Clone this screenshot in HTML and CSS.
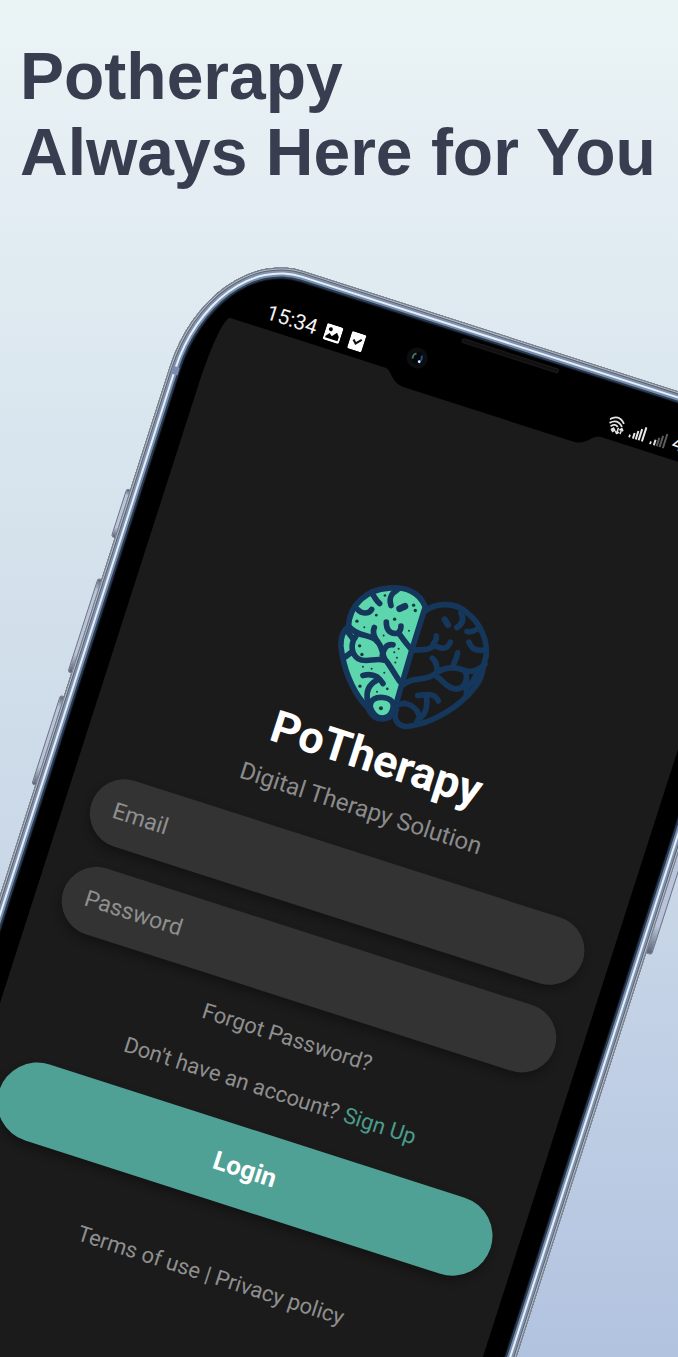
FILE: index.html
```html
<!DOCTYPE html>
<html lang="en">
<head>
<meta charset="utf-8">
<meta name="viewport" content="width=device-width, initial-scale=1">
<title>Potherapy</title>
<link rel="stylesheet" href="styles.css">
</head>
<body>
<main class="page">
  <h1 class="headline">Potherapy<br>Always Here for You</h1>

  <section class="phone" aria-label="PoTherapy app">
    <span class="key key-mute"></span>
    <span class="key key-up"></span>
    <span class="key key-down"></span>
    <span class="key key-power"></span>
    <div class="frame"></div>
    <span class="antenna"></span>

    <header class="status">
      <div class="status-group">
        <span>15:34</span>
        <svg width="17" height="17" viewBox="0 0 17 17"><path fill="#fff" fill-rule="evenodd" d="M2 0h13a2 2 0 0 1 2 2v13a2 2 0 0 1-2 2H2a2 2 0 0 1-2-2V2a2 2 0 0 1 2-2zM2 13v1.500h13V10l-3-3.500-4 5-3-2.500zM5 3a2 2 0 1 0 .01 0z"/></svg>
        <svg width="15" height="18" viewBox="0 0 14 17"><path fill="#fff" d="M1 0h12l1 1v15l-1 1H1l-1-1V1z"/><path fill="none" stroke="#111" stroke-width="2" d="M3.500 7.500l3 3 4.500-5"/></svg>
      </div>
      <div class="status-group status-right">
        <svg width="17" height="18" viewBox="0 0 17 18" fill="none" stroke="#e4e4e4" stroke-width="1.800"><path d="M0 5.500Q7.500-2.500 15 5.500M1 9Q7.500 2.500 14 9M3 12Q7 7.500 10 10.500"/><path d="M5 14.500l1.500-1.500L8 14.500 6.500 16z"/><path stroke-width="1.500" d="M11 11v6M9 15l2 2.200L13 15M14.500 16.500V11M12.500 13l2-2.200 2 2.200"/></svg>
        <svg width="16" height="16" viewBox="0 0 16 16" fill="#e8e8e8"><path d="M0 13h2v3H0zM4 10h2v6H4zM7 7h2v9H7zM10 4h2v12h-2zM13.500 1h2v15h-2z"/></svg>
        <svg width="16" height="16" viewBox="0 0 16 16"><path fill="#ddd" d="M0 13h2v3H0zM4 10h2v6H4z"/><path fill="#5c5c5c" d="M7 7h2v9H7zM10 4h2v12h-2zM13.500 1h2v15h-2z"/></svg>
        <span>45%</span>
      </div>
    </header>
    <span class="speaker"></span>

    <div class="screen">
      <svg class="notch" width="226" height="14" viewBox="0 0 226 14"><path d="M0-2V0C8 1 8 13 26 13H200C216 13 216 1 226 0V-2z"/></svg>

      <svg class="logo" width="160" height="152" viewBox="28 38 480 456">
        <g transform="rotate(-17.800 280 262)" fill="none" stroke="#15375c" stroke-width="17" stroke-linecap="round" stroke-linejoin="round">
          <path fill="#5dd6ae" d="M315 112C298 68 255 50 205 56C140 60 88 104 84 172C60 190 58 226 65 252C76 320 108 382 142 414C156 444 176 452 196 447C215 444 225 428 226 408L243 350L275 240Z"/>
          <path d="M315 124C345 100 405 96 440 130C480 160 504 215 497 262C486 292 490 322 466 350C420 410 340 462 262 471C230 471 218 448 228 420"/>
          <path d="M87 172C110 202 148 194 168 212S186 262 196 272S228 322 240 338"/>
          <path d="M106 202C90 222 92 254 114 268S165 264 190 272M76 262L96 246M98 208L82 186"/>
          <path d="M162 174C154 192 164 202 170 216M218 226C196 222 190 242 186 258"/>
          <path d="M112 120C122 132 144 136 154 120M158 76C164 84 168 94 178 102M212 108C204 82 216 70 232 60"/>
          <path stroke-width="20" d="M238 118L254 110"/>
          <path d="M198 158C198 180 206 190 224 192S242 170 242 170M236 192C246 206 256 222 274 240"/>
          <path d="M128 318C158 310 176 322 188 342M168 334C144 346 136 366 142 398"/>
          <path fill="#5dd6ae" d="M150 414C148 390 168 382 188 384S226 396 216 424S166 458 150 414Z"/>
          <path d="M276 242C312 240 330 242 342 226M348 200C350 214 338 222 338 226C356 236 380 246 390 218"/>
          <path stroke-width="19" d="M373 150L383 166"/>
          <path d="M422 130C430 146 430 162 410 174M440 186C454 190 462 184 472 178M446 218C452 236 466 246 490 242"/>
          <path d="M252 344C278 320 310 338 342 314S410 292 430 302S480 300 494 284M336 266C354 280 346 290 352 306M412 250C410 266 402 276 398 292"/>
          <path d="M350 322C370 332 376 356 406 358S444 324 434 306M436 336C432 350 442 362 438 374M474 300C466 318 466 330 446 348"/>
          <path d="M292 378C320 374 344 370 354 394M318 378C322 404 318 430 302 444"/>
          <path d="M230 408C250 394 280 406 292 428S290 450 290 456"/>
        </g>
        <g transform="rotate(-17.800 280 262)" fill="#123a3c">
          <circle cx="110" cy="155" r="5"/><circle cx="118" cy="229" r="5"/><circle cx="125" cy="255" r="5"/><circle cx="119" cy="350" r="5"/><circle cx="182" cy="416" r="6"/><circle cx="223" cy="149" r="5"/><circle cx="280" cy="107" r="5"/><circle cx="285" cy="123" r="5"/><circle cx="168" cy="137" r="4"/><circle cx="194" cy="78" r="4"/><circle cx="128" cy="292" r="3"/><circle cx="154" cy="298" r="3"/><circle cx="192" cy="310" r="3"/><circle cx="201" cy="358" r="4"/><circle cx="170" cy="367" r="3"/><circle cx="222" cy="248" r="3"/><circle cx="235" cy="238" r="3"/><circle cx="230" cy="265" r="3"/><circle cx="225" cy="279" r="3"/><circle cx="266" cy="184" r="3"/><circle cx="190" cy="198" r="3"/><circle cx="132" cy="173" r="3"/>
        </g>
      </svg>

      <h2 class="brand">PoTherapy</h2>
      <p class="tagline">Digital Therapy Solution</p>

      <form class="form">
        <input class="field" type="email" placeholder="Email" aria-label="Email">
        <input class="field" type="password" placeholder="Password" aria-label="Password">
        <a class="note" href="#forgot">Forgot Password?</a>
        <p class="note note-signup">Don't have an account? <a class="signup" href="#signup">Sign Up</a></p>
        <button class="login" type="button">Login</button>
      </form>
      <p class="note note-legal"><a href="#terms">Terms of use</a> | <a href="#privacy">Privacy policy</a></p>
    </div>
    <svg class="camera" width="22" height="22" viewBox="0 0 22 22"><circle cx="11" cy="11" r="10.500" fill="#0c0d0e"/><circle cx="11" cy="11" r="6" fill="#030508"/><path d="M7 13a4.500 4.500 0 0 1 2-6" fill="none" stroke="#4d7364" stroke-width="2"/><path d="M14.500 7.500a5 5 0 0 1 0 6" fill="none" stroke="#1f4f96" stroke-width="2"/><circle cx="14" cy="14" r="1.400" fill="#dcebff"/></svg>
  </section>
</main>
</body>
</html>
```
FILE: styles.css
```css
* { box-sizing: border-box; }

body { margin: 0; }

.page {
  height: 100vh;
  overflow: hidden;
  background: linear-gradient(#ebf4f5 0%, #e1ebf2 18%, #d7e4ed 36%, #cad8e8 63%, #b2c3e0 100%);
  font-family: Roboto, "Liberation Sans", sans-serif;
}

.headline {
  margin: 0;
  padding: 38px 0 0 20px;
  height: 241px;
  color: #383e4f;
  font: bold 66px/76px "Liberation Sans", Arial, sans-serif;
  white-space: nowrap;
}

/* Device */
.phone {
  position: relative;
  width: 633px;
  min-height: 1340px;
  margin-left: 210px;
  padding: 0 32px 0 33px;
  border-radius: 98px / 132px;
  background: #000;
  transform: rotate(17.8deg);
  transform-origin: 0 0;
}

.frame {
  position: absolute;
  inset: 0;
  border-radius: inherit;
  box-shadow:
    inset 0 0 0 1px #747981,
    inset 0 0 0 2px #b3bcc8,
    inset 0 0 0 3px #5b6371,
    inset 0 0 0 5px #8193b0,
    inset 0 0 0 7px #e6eff8,
    inset 0 0 0 9px #7890b0,
    inset 0 0 0 11px #2b3a50,
    inset 0 0 0 12px #0b1017;
}

.antenna {
  position: absolute;
  left: 3px;
  top: 130px;
  width: 7px;
  height: 8px;
  background: #7d8ab0;
}

.key {
  position: absolute;
  left: -4px;
  width: 6px;
  border: 1px solid #6b7282;
  border-radius: 3px 0 0 3px;
  background: linear-gradient(#5c6578, #b9c4dc 12%, #b9c4dc 80%, #5c6578);
}
.key-mute { top: 261px; height: 51px; }
.key-up { top: 355px; height: 99px; }
.key-down { top: 478px; height: 94px; }
.key-power {
  top: 400px;
  left: auto;
  right: -6px;
  width: 8px;
  height: 145px;
  border-radius: 0 3px 3px 0;
}

.status {
  position: relative;
  display: flex;
  justify-content: space-between;
  height: 67px;
  padding: 34px 60px 0 43px;
  color: #f2f2f2;
  font-size: 21px;
  line-height: 33px;
}
.status-group { display: flex; align-items: center; gap: 9px; }
.status-right { gap: 6px; }

.speaker {
  position: absolute;
  left: 270px;
  top: 15px;
  width: 102px;
  height: 5px;
  border: 1px solid #1c1c1c;
  border-radius: 3px;
  background: #111;
}
.camera { position: absolute; left: 222px; top: 37px; }

/* App screen */
.screen {
  position: relative;
  display: flex;
  flex-direction: column;
  min-height: 1240px;
  padding: 192px 26px 0;
  border-radius: 10px 10px 40px 40px / 70px 70px 40px 40px;
  background: #1b1b1b;
  text-align: center;
}
.notch { position: absolute; left: 173px; top: 0; overflow: visible; }
.logo { align-self: center; overflow: visible; }

.brand {
  margin: 5px 0 0;
  color: #fff;
  font-size: 45px;
  line-height: 52px;
}
.tagline {
  margin: 12px 0 29px;
  color: #8b8b8b;
  font-size: 24px;
  line-height: 28px;
}

.form { display: flex; flex-direction: column; }
.field {
  width: 100%;
  height: 69px;
  margin-bottom: 23px;
  padding: 0 23px;
  border: 0;
  border-radius: 35px;
  background: #333;
  box-shadow: 0 5px 10px rgba(0, 0, 0, 0.3);
  color: #ddd;
  font: 23px Roboto, sans-serif;
}
.field::placeholder { color: #8f8f8f; opacity: 1; }

.note {
  margin: 0;
  color: #8f8f8f;
  font-size: 22px;
  line-height: 28px;
  text-decoration: none;
}
.note a { color: inherit; text-decoration: none; }
.note .signup { color: #4a9c8c; }
.note-signup { margin: 28px 0; }
.note-legal { margin-top: 58px; }

.login {
  height: 80px;
  border: 0;
  border-radius: 40px;
  background: #50a195;
  box-shadow: 0 5px 10px rgba(0, 0, 0, 0.3);
  color: #fff;
  font: bold 26px Roboto, sans-serif;
}
```
